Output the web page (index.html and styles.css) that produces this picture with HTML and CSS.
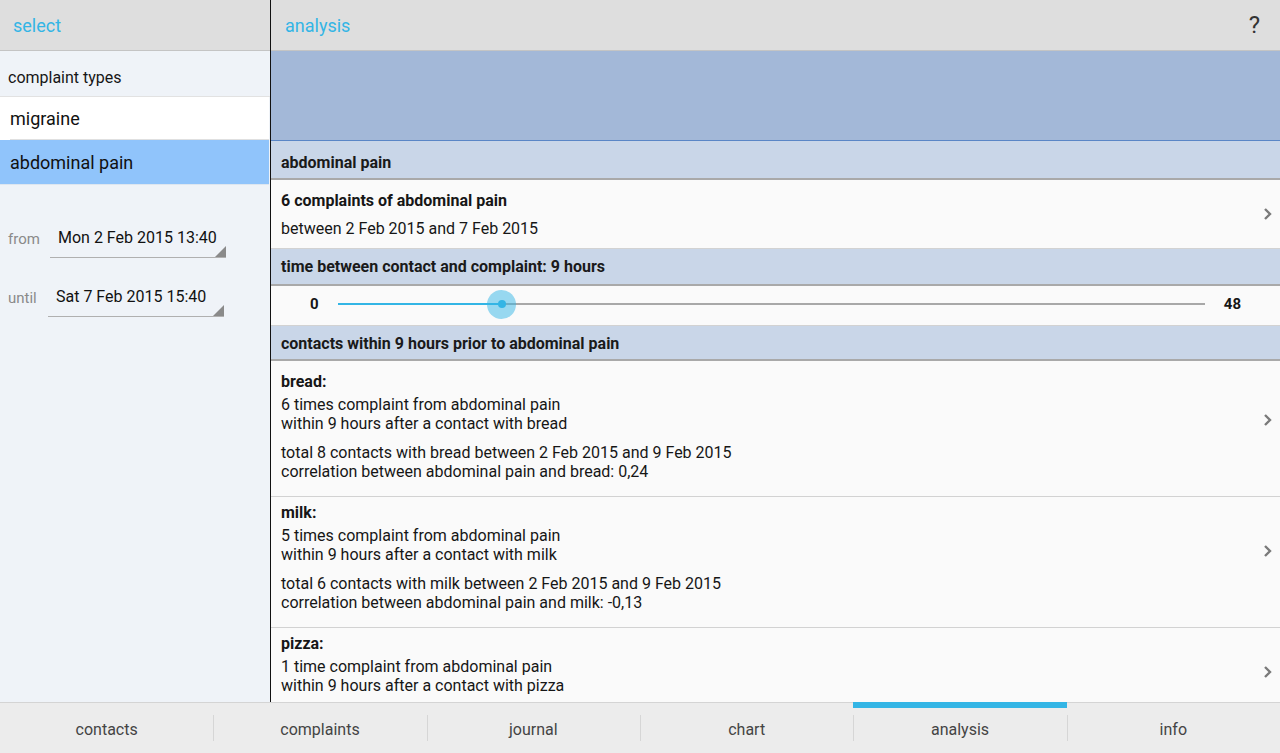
FILE: index.html
```html
<!DOCTYPE html>
<html>
<head>
<meta charset="utf-8">
<link rel="stylesheet" href="styles.css">
</head>
<body>
<div class="app">
  <div class="main">
    <aside class="left">
      <div class="bar"><span class="bar-title">select</span></div>
      <div class="left-body">
        <div class="list-label">complaint types</div>
        <div class="list-item">migraine</div>
        <div class="list-item selected">abdominal pain</div>
        <div class="dates">
          <div class="date-row">
            <span class="date-label">from</span>
            <span class="date-field">Mon 2 Feb 2015 13:40</span>
          </div>
          <div class="date-row until">
            <span class="date-label">until</span>
            <span class="date-field">Sat 7 Feb 2015 15:40</span>
          </div>
        </div>
      </div>
    </aside>
    <section class="right">
      <div class="bar"><span class="bar-title">analysis</span><span class="help">?</span></div>
      <div class="right-body">
        <div class="band"></div>
        <div class="sec-head h1">abdominal pain</div>
        <div class="item summary">
          <div class="item-text">
            <div class="b">6 complaints of abdominal pain</div>
            <div class="sub">between 2 Feb 2015 and 7 Feb 2015</div>
          </div>
          <svg class="chev" viewBox="0 0 10 14" width="10" height="14"><path d="M2 2 L7 7 L2 12" fill="none" stroke="#7a7a7a" stroke-width="2.4"/></svg>
        </div>
        <div class="sec-head h2">time between contact and complaint: 9 hours</div>
        <div class="slider-row">
          <span class="num">0</span>
          <div class="track">
            <div class="fill" style="width:18.8%"></div>
            <div class="thumb" style="left:18.8%"><span class="dot"></span></div>
          </div>
          <span class="num">48</span>
        </div>
        <div class="sec-head h3">contacts within 9 hours prior to abdominal pain</div>
        <div class="item contact bread">
          <div class="item-text">
            <div class="b">bread:</div>
            <div>6 times complaint from abdominal pain<br>within 9 hours after a contact with bread</div>
            <div class="gap">total 8 contacts with bread between 2 Feb 2015 and 9 Feb 2015<br>correlation between abdominal pain and bread: 0,24</div>
          </div>
          <svg class="chev" viewBox="0 0 10 14" width="10" height="14"><path d="M2 2 L7 7 L2 12" fill="none" stroke="#7a7a7a" stroke-width="2.4"/></svg>
        </div>
        <div class="item contact milk">
          <div class="item-text">
            <div class="b">milk:</div>
            <div>5 times complaint from abdominal pain<br>within 9 hours after a contact with milk</div>
            <div class="gap">total 6 contacts with milk between 2 Feb 2015 and 9 Feb 2015<br>correlation between abdominal pain and milk: -0,13</div>
          </div>
          <svg class="chev" viewBox="0 0 10 14" width="10" height="14"><path d="M2 2 L7 7 L2 12" fill="none" stroke="#7a7a7a" stroke-width="2.4"/></svg>
        </div>
        <div class="item contact pizza">
          <div class="item-text">
            <div class="b">pizza:</div>
            <div>1 time complaint from abdominal pain<br>within 9 hours after a contact with pizza</div>
          </div>
          <svg class="chev" viewBox="0 0 10 14" width="10" height="14"><path d="M2 2 L7 7 L2 12" fill="none" stroke="#7a7a7a" stroke-width="2.4"/></svg>
        </div>
      </div>
    </section>
  </div>
  <nav class="tabs">
    <div class="tab">contacts</div>
    <div class="tab">complaints</div>
    <div class="tab">journal</div>
    <div class="tab">chart</div>
    <div class="tab active">analysis</div>
    <div class="tab">info</div>
  </nav>
</div>
</body>
</html>
```

FILE: styles.css
```css
* { box-sizing: border-box; }
html, body { margin: 0; padding: 0; }
body {
  width: 1280px;
  height: 753px;
  overflow: hidden;
  font-family: Roboto, "Liberation Sans", sans-serif;
  color: #161616;
  background: #fafafa;
}
.app {
  display: grid;
  grid-template-rows: 702px 51px;
  height: 753px;
}
.main {
  display: flex;
  overflow: hidden;
}
.left {
  width: 271px;
  flex: none;
  border-right: 1px solid #111;
  display: flex;
  flex-direction: column;
  background: #eff3f8;
}
.right {
  flex: 1;
  display: flex;
  flex-direction: column;
  overflow: hidden;
}
.bar {
  height: 51px;
  flex: none;
  background: #dedede;
  border-bottom: 1px solid #c4c4c4;
  display: flex;
  align-items: center;
  padding: 0 13px;
}
.right .bar { padding: 0 20px 0 14px; }
.bar-title {
  color: #33b5e5;
  font-size: 18px;
  margin-top: 1px;
}
.help {
  margin-left: auto;
  font-size: 24px;
  color: #333;
  margin-top: 0;
}
.left-body { flex: 1; }
.list-label {
  height: 46px;
  padding: 17px 0 0 8px;
  font-size: 16px;
  border-bottom: 1px solid #e2e2e2;
}
.list-item {
  height: 43px;
  display: flex;
  align-items: center;
  padding-left: 10px;
  font-size: 18px;
  background: #fff;
  color: #111;
  margin-right: 1px;
  position: relative;
}
.list-item::after {
  content: "";
  position: absolute;
  left: 10px; right: 0; bottom: 0;
  border-bottom: 1px solid #e0e0e0;
}
.list-item.selected {
  background: #90c4fb;
  height: 45px;
  padding-bottom: 1px;
}
.list-item.selected::after { left: 0; border-color: #dde6f0; }
.dates {
  padding-top: 35px;
}
.date-row {
  display: flex;
  align-items: center;
  height: 38px;
}
.date-row.until { margin-top: 21px; }
.date-label {
  width: 50px;
  padding-left: 8px;
  color: #8a8a8a;
  font-size: 15px;
  margin-top: 0;
}
.until .date-label { width: 48px; }
.date-field {
  width: 176px;
  height: 38px;
  display: flex;
  align-items: center;
  padding: 0 0 2px 8px;
  font-size: 16px;
  color: #111;
  border-bottom: 1px solid #b0b0b0;
  position: relative;
}
.date-field::after {
  content: "";
  position: absolute;
  right: 0; bottom: 0;
  width: 0; height: 0;
  border-left: 11px solid transparent;
  border-bottom: 11px solid #8a8a8a;
}
.right-body {
  flex: 1;
  overflow: hidden;
}
.band {
  height: 90px;
  background: #a3b8d8;
  border-bottom: 1px solid #5a86c6;
}
.sec-head {
  background: #c9d6e8;
  border-bottom: 2px solid #a9a9a9;
  font-weight: bold;
  font-size: 16px;
  line-height: 19px;
  padding: 8px 10px 0;
  color: #1a1a1a;
}
.sec-head.h1 { height: 39px; padding-top: 12px; }
.sec-head.h2 { height: 37px; }
.sec-head.h3 { height: 35px; }
.item {
  display: flex;
  align-items: center;
  background: #fafafa;
  border-bottom: 1px solid #d2d2d2;
  padding: 0 7px 0 10px;
  font-size: 16px;
  line-height: 19px;
}
.item-text { flex: 1; }
.b { font-weight: bold; font-size: 16px; }
.summary { height: 69px; }
.summary .sub { margin-top: 9px; }
.contact { align-items: flex-start; }
.contact.bread { height: 136px; padding-top: 11px; }
.contact.milk { height: 131px; padding-top: 6px; }
.contact.pizza { height: 120px; padding-top: 6px; }
.contact .b { margin-bottom: 4px; }
.contact .gap { margin-top: 10px; }
.contact .chev { margin-top: 41px; }
.contact.pizza .chev { margin-top: 31px; }
.chev { flex: none; }
.slider-row {
  height: 40px;
  display: flex;
  align-items: center;
  background: #fafafa;
  border-bottom: 1px solid #d2d2d2;
  padding: 0 39px 3px 39px;
}
.num { font-weight: bold; font-size: 15px; width: 28px; }
.num:last-child { text-align: right; width: 30px; }
.track {
  flex: 1;
  height: 2px;
  background: #a8a8a8;
  position: relative;
  margin-right: 6px;
}
.fill {
  position: absolute;
  left: 0; top: 0; bottom: 0;
  background: #33b5e5;
}
.thumb {
  position: absolute;
  top: 1px;
  width: 29px; height: 29px;
  margin: -14.5px 0 0 -13.5px;
  border-radius: 50%;
  background: rgba(51, 181, 229, 0.5);
  display: flex;
  align-items: center;
  justify-content: center;
}
.dot {
  width: 8px; height: 8px;
  border-radius: 50%;
  background: #33b5e5;
}
.tabs {
  display: grid;
  grid-template-columns: repeat(6, 1fr);
  background: #ececec;
  border-top: 1px solid #d4d4d4;
}
.tab {
  display: flex;
  align-items: center;
  justify-content: center;
  font-size: 16px;
  color: #444;
  position: relative;
  padding-top: 3px;
}
.tab + .tab::before {
  content: "";
  position: absolute;
  left: 0; top: 12px;
  height: 26px;
  border-left: 1px solid #d6d6d6;
}
.tab.active::after {
  content: "";
  position: absolute;
  left: 0; right: 0; top: -1px;
  height: 6px;
  background: #33b5e5;
}
```
